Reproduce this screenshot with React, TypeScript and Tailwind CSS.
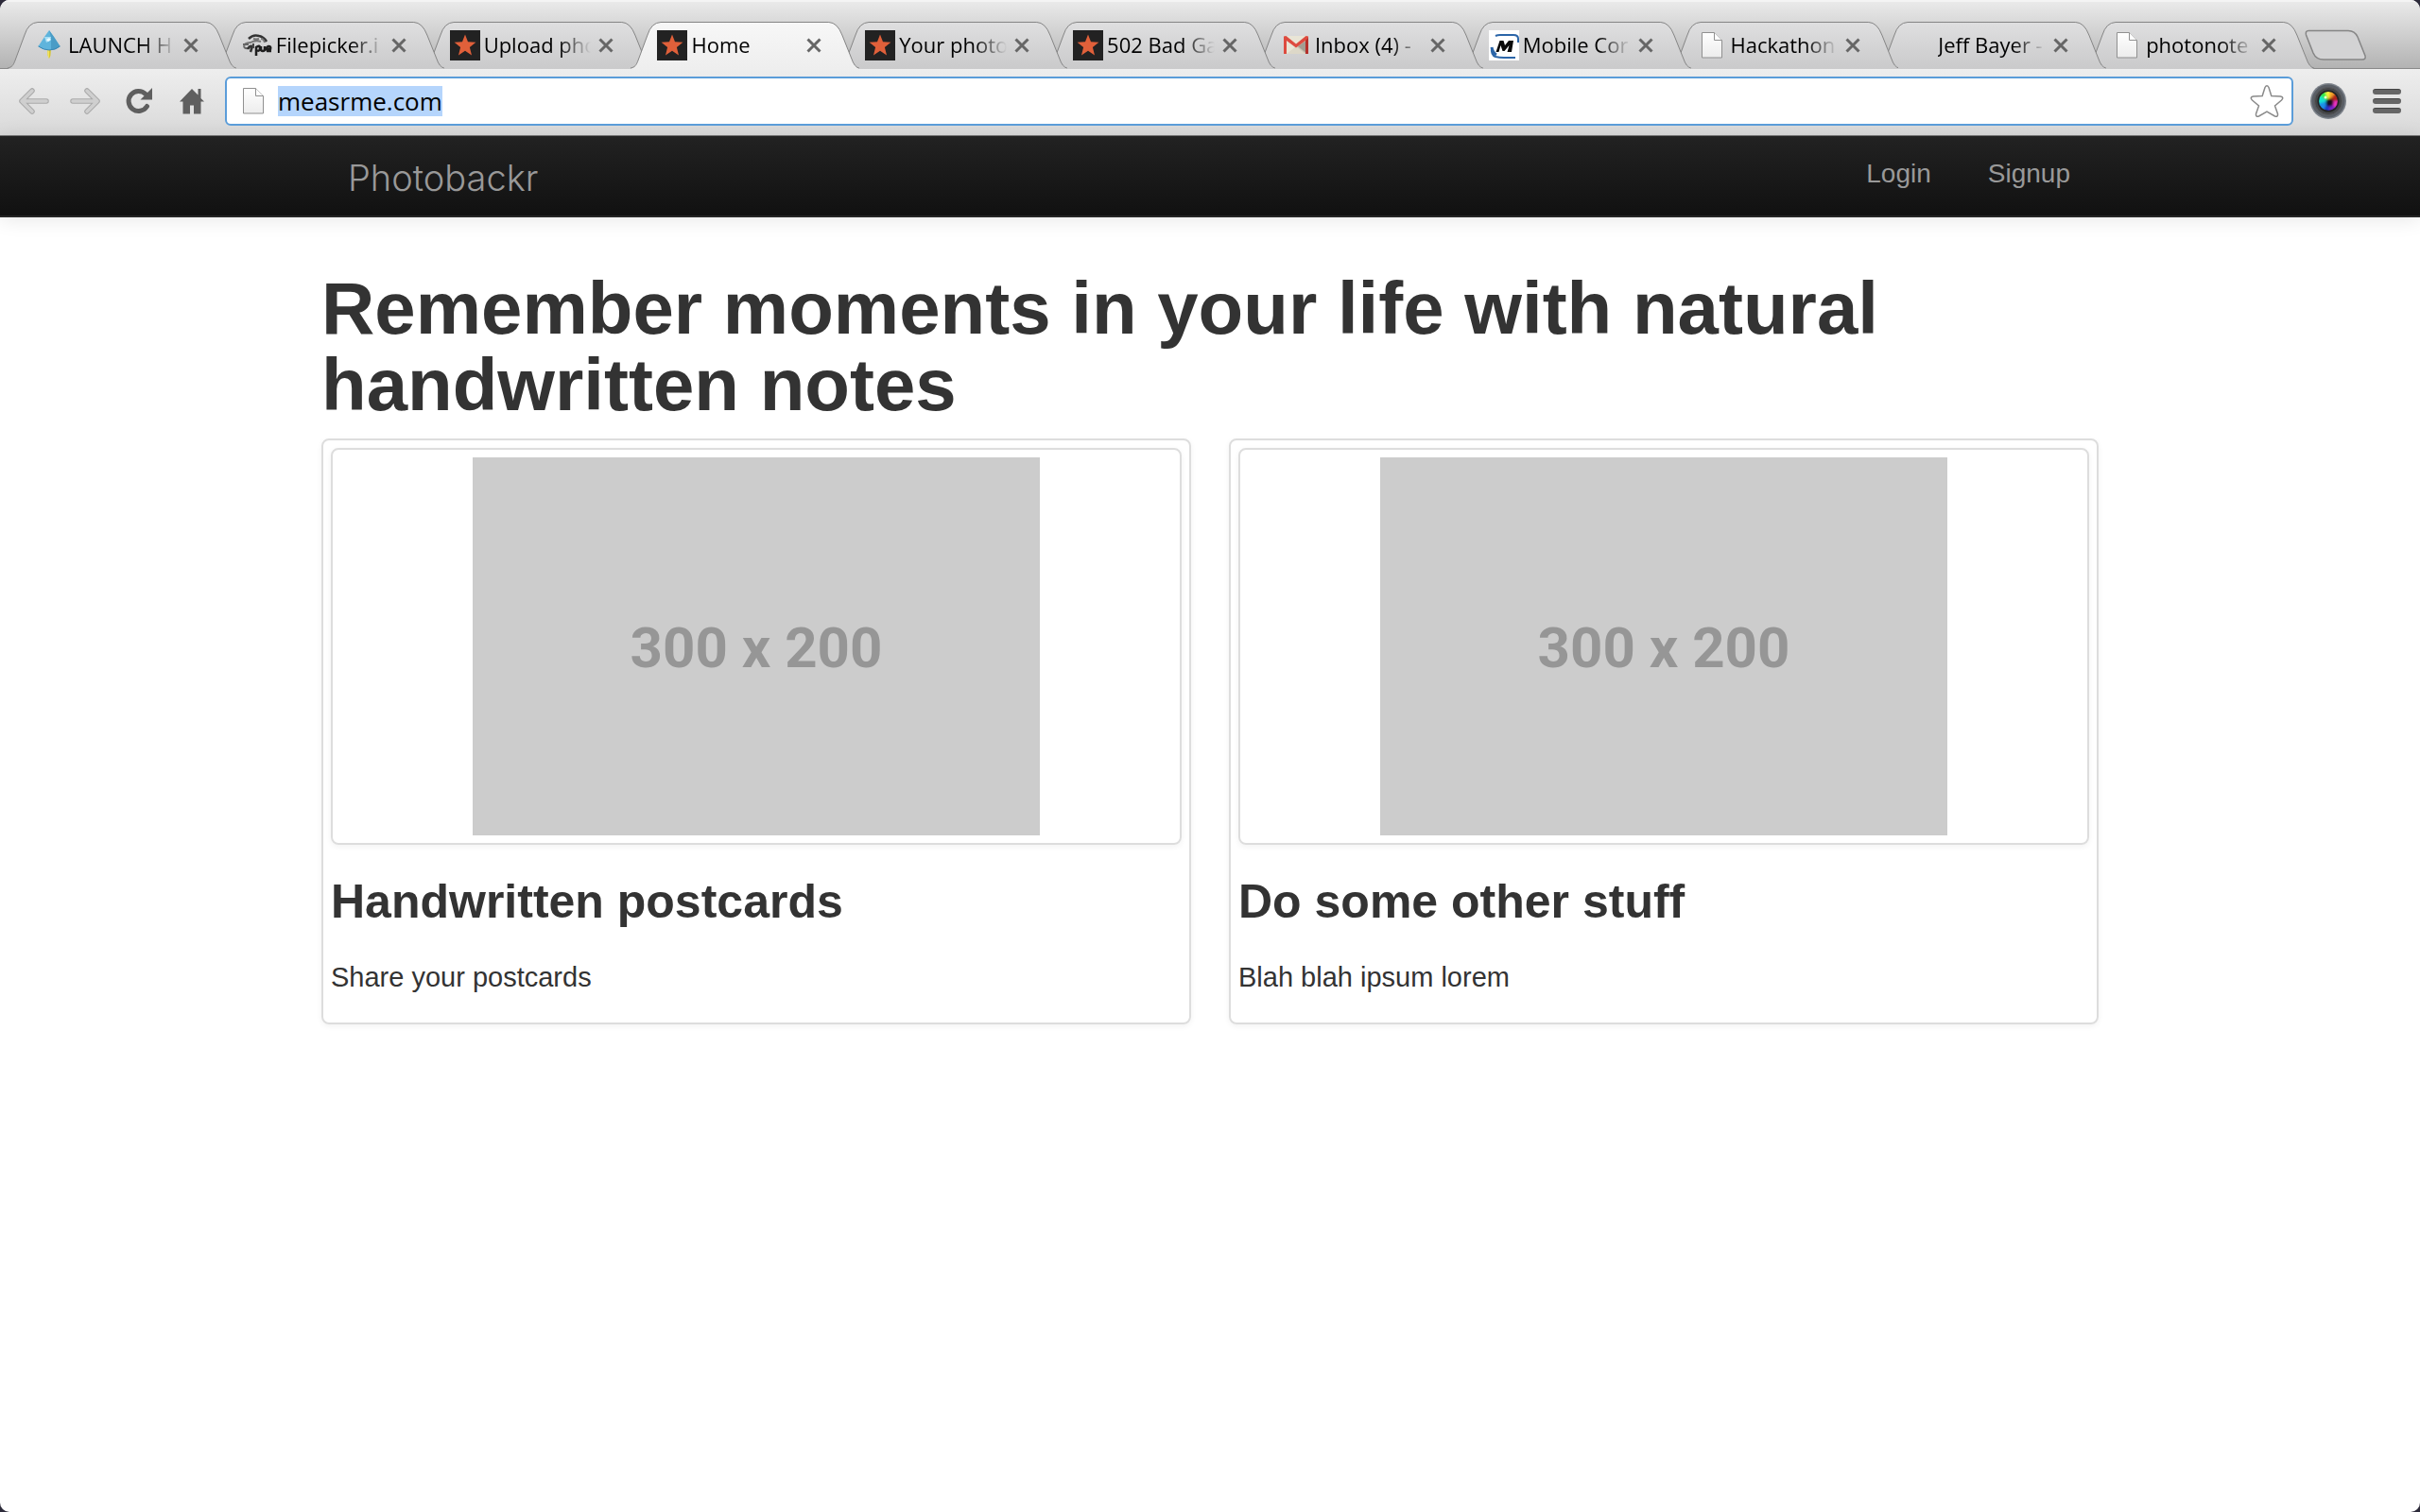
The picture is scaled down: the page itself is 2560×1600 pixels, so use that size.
import { useEffect, useId, useRef, type ReactNode } from "react";

function StarFavicon() {
  return (
    <svg viewBox="0 0 32 32" className="size-8" aria-hidden="true">
      <rect width="32" height="32" fill="#222" />
      <path d="M16 4.500l3 7.800 8.400.5-6.500 5.200 2.100 8.400L16 21.700l-7 4.700 2.100-8.400L4.600 12.800l8.400-.5z" fill="#e0603a" />
    </svg>
  );
}

function PageIcon() {
  const id = useId();
  return (
    <svg viewBox="0 0 32 32" className="size-8" aria-hidden="true">
      <defs>
        <linearGradient id={id} x1="0" y1="0" x2="0" y2="1">
          <stop offset="0" stopColor="#fff" />
          <stop offset="1" stopColor="#ececec" />
        </linearGradient>
      </defs>
      <path d="M5.500 2.500h13l8 8v18.500h-21z" fill={`url(#${id})`} stroke="#909090" />
      <path d="M18.500 2.500v8h8" fill="#fff" stroke="#909090" />
    </svg>
  );
}

function LaunchFavicon() {
  return (
    <svg viewBox="0 0 32 32" className="size-8" aria-hidden="true">
      <path d="M14 18h4l-.6 9L16 30l-1.400-3z" fill="#d9c62c" />
      <path d="M14 18h2v12l-1.400-3z" fill="#efe160" />
      <path d="M16 0l5 7 6.500 10-4.500 3-7 1-7-1-4.500-3L11 7z" fill="#5fb4dc" />
      <path d="M16 0l5 7 6.500 10-4.500 3-5 .8L18 8z" fill="#4a9cc6" />
      <path d="M11 7h7l-1 4-4 2z" fill="#a5def5" />
      <path d="M13 10l3-2 2 2-3 2z" fill="#eafaff" />
      <path d="M4.500 17l6 3 5.500 1 6-1 5.500-3" fill="none" stroke="#3987b5" />
    </svg>
  );
}

function FilepickerFavicon() {
  return (
    <svg viewBox="0 0 32 32" className="size-8" fill="none" aria-hidden="true">
      <path d="M7 9q5-5 11-3 5 1 8 6" stroke="#333" strokeWidth="2.500" />
      <path d="M2 18q0-5 7-5 5-3 11-1M12 9q3 1 6 0M20 9q3 0 4 4" stroke="#777" strokeWidth="2" />
      <path d="M1 15h6M2 18q4 3 8-1" stroke="#666" strokeWidth="2" />
      <path d="M6 20q2-4 5-3l-2 6" stroke="#333" strokeWidth="2.500" />
      <path d="M15 27v-9q4-3 4 1t-4 2M20 17v4q2 2 4 0v-4M31 22h-4q-2-4 1-5 3 0 2 3h-3" stroke="#1f1f1f" strokeWidth="2.500" />
      <path d="M12 14v5" stroke="#444" strokeWidth="2" />
    </svg>
  );
}

function GmailFavicon() {
  return (
    <svg viewBox="0 0 32 32" className="size-8" aria-hidden="true">
      <path d="M4 6h24v19H4z" fill="#e9e5d6" />
      <path d="M28 10v15H8l10-8z" fill="#c9c4b4" />
      <path d="M18 17l10-7v15z" fill="#a39d92" />
      <path d="M6 25l10-8 10 8" fill="#ddd8c8" />
      <path d="M3 6.500L5.500 6 16 14.500 26.500 6l2.500.5V25h-3V11L16 18.500 6 11v14H3z" fill="#dd4b40" />
      <path d="M26 11l3-3v17h-3z" fill="#b4302b" />
    </svg>
  );
}

function MobileFavicon() {
  return (
    <svg viewBox="0 0 32 32" className="size-8" fill="none" aria-hidden="true">
      <rect width="32" height="32" fill="#fff" />
      <path d="M7 6q2-1 5-1h14q5 0 5 4v4M3 18q-1 8 4 10 4 1 9 1h12" stroke="#2b65a8" strokeWidth="2" />
      <path d="M3 18q1 6 5 8" stroke="#2b65a8" strokeWidth="3" />
      <path d="M7.500 23h3l2-7 2 6h2l5-6-2 7h4.500l2-12h-5l-4 5-1.500-5h-4z" fill="#0b0b0b" />
    </svg>
  );
}

function BlankFavicon() {
  return <span className="block size-8" />;
}

type Tab = { title: string; icon: () => ReactNode; active?: boolean; layer: string };

const tabs: Tab[] = [
  { title: "LAUNCH H", icon: LaunchFavicon, layer: "z-[11]" },
  { title: "Filepicker.i", icon: FilepickerFavicon, layer: "z-10" },
  { title: "Upload pho", icon: StarFavicon, layer: "z-[9]" },
  { title: "Home", icon: StarFavicon, active: true, layer: "z-20" },
  { title: "Your photo", icon: StarFavicon, layer: "z-[7]" },
  { title: "502 Bad Ga", icon: StarFavicon, layer: "z-[6]" },
  { title: "Inbox (4) -", icon: GmailFavicon, layer: "z-[5]" },
  { title: "Mobile Cor", icon: MobileFavicon, layer: "z-[4]" },
  { title: "Hackathon", icon: PageIcon, layer: "z-[3]" },
  { title: "Jeff Bayer -", icon: BlankFavicon, layer: "z-[2]" },
  { title: "photonote", icon: PageIcon, layer: "z-[1]" },
];

function TabShape({ active }: { active?: boolean }) {
  const id = useId();
  return (
    <svg viewBox="0 0 242 50" preserveAspectRatio="none" className="absolute inset-0 -z-10 size-full" aria-hidden="true">
      <defs>
        <linearGradient id={id} x1="0" y1="0" x2="0" y2="1">
          <stop offset="0" stopColor={active ? "#f7f7f7" : "#dfdfe0"} />
          <stop offset="1" stopColor={active ? "#eeeeee" : "#cacacb"} />
        </linearGradient>
      </defs>
      <path
        d="M0 50C5 48 6 46 8 41L18 14Q22 1 32 .5H210Q219 1 224 14L234 39Q237 48 242 50Z"
        fill={`url(#${id})`}
      />
      <path
        d="M0 49C5 48 6 46 8 41L18 14Q22 1 32 .5H210Q219 1 224 14L234 39Q237 48 242 49"
        fill="none"
        stroke="#858585"
      />
    </svg>
  );
}

function BrowserTab({ tab }: { tab: Tab }) {
  const Icon = tab.icon;
  return (
    <div
      role="tab"
      aria-selected={!!tab.active}
      className={`relative isolate -ml-[22px] flex h-[50px] min-w-0 flex-1 items-center pr-9 pl-7 ${tab.layer}`}
    >
      <TabShape active={tab.active} />
      <span className="shrink-0">
        <Icon />
      </span>
      <span className="ml-1 min-w-0 flex-1 overflow-hidden mask-r-from-70% mask-r-to-100% pb-[2px] text-[22px] leading-8 font-medium whitespace-nowrap">
        {tab.title}
      </span>
      <button type="button" aria-label={`Close ${tab.title}`} className="ml-1 flex size-6 shrink-0 items-center justify-center">
        <svg viewBox="0 0 16 16" className="size-4" fill="none" stroke="#666" strokeWidth="3" aria-hidden="true">
          <path d="M1.500 1.500l13 13M14.500 1.500l-13 13" />
        </svg>
      </button>
    </div>
  );
}

function TabStrip() {
  return (
    <div className="flex h-[73px] items-end bg-linear-to-b from-[#ebebeb] via-[#cfcfcf] to-[#b2b2b2] shadow-[inset_0_-1px_0_#8a8a8a,inset_0_2px_0_#f4f4f4]">
      <div role="tablist" className="flex min-w-0 flex-1 pl-[30px]">
        {tabs.map((t) => (
          <BrowserTab key={t.title} tab={t} />
        ))}
      </div>
      <button type="button" aria-label="New tab" className="mr-14 mb-2 -ml-[10px]">
        <svg viewBox="0 0 66 34" className="h-[34px] w-[66px]" aria-hidden="true">
          <path
            d="M4 1.500H46Q53 1.500 56 8L64 28Q65 32 61 32H20Q12 32 9 25L1.500 6Q.5 1.500 4 1.500Z"
            fill="#d3d3d4"
            stroke="#858585"
            strokeWidth="1.500"
          />
        </svg>
      </button>
    </div>
  );
}

function Arrow({ flip }: { flip?: boolean }) {
  return (
    <svg viewBox="0 0 32 28" className={flip ? "h-7 w-8 -scale-x-100" : "h-7 w-8"} fill="none" strokeLinecap="round" strokeLinejoin="round" aria-hidden="true">
      <path d="M14 3L3 14l11 11M3 14h26" stroke="#a9a9a9" strokeWidth="5.500" />
      <path d="M14 3L3 14l11 11M3 14h26" stroke="#cfcfcf" strokeWidth="3.500" />
    </svg>
  );
}

function CameraIcon() {
  const id = useId();
  return (
    <svg viewBox="0 0 38 38" className="size-[38px]" aria-hidden="true">
      <defs>
        <filter id={id} x="-20%" y="-20%" width="140%" height="140%">
          <feGaussianBlur stdDeviation="1.200" />
        </filter>
        <clipPath id={`${id}c`}>
          <circle cx="19" cy="19" r="10" />
        </clipPath>
      </defs>
      <circle cx="19" cy="19" r="19" fill="#7d838b" />
      <circle cx="19" cy="19" r="17.500" fill="#5a5f66" />
      <circle cx="19" cy="19" r="14.500" fill="#444648" stroke="#58595b" />
      <circle cx="19" cy="19" r="11.500" fill="#222223" />
      <g clipPath={`url(#${id}c)`}>
        <g filter={`url(#${id})`}>
          <circle cx="19" cy="19" r="9" fill="#2a2440" />
          <path d="M19 19L8 24V10z" fill="#17e3d0" />
          <path d="M19 19L8 12 17 7z" fill="#35e84a" />
          <path d="M19 19L15 7h8z" fill="#f8f63a" />
          <path d="M19 19L21 7l8 3z" fill="#f3a32a" />
          <path d="M19 19l8-9 4 10z" fill="#b3271f" />
          <path d="M19 19l11 0-3 9z" fill="#f032c4" />
          <path d="M19 19l9 8-8 4z" fill="#7a22c8" />
          <path d="M19 19l2 11-8-1z" fill="#1d35c8" />
          <path d="M19 19l-6 11-6-8z" fill="#1a8fe8" />
          <circle cx="20.500" cy="20.500" r="4" fill="#15111b" />
        </g>
      </g>
      <circle cx="16" cy="15" r="1.500" fill="#f4ffc8" />
    </svg>
  );
}

function Toolbar() {
  const url = useRef<HTMLInputElement>(null);
  useEffect(() => {
    url.current?.focus();
    url.current?.select();
  }, []);
  return (
    <div className="flex h-[71px] items-center border-b border-[#767676] bg-linear-to-b from-[#eeeeee] to-[#d9d9d9] pr-5 pb-[2px] pl-5">
      <button type="button" aria-label="Back">
        <Arrow />
      </button>
      <button type="button" aria-label="Forward" className="ml-[22px]">
        <Arrow flip />
      </button>
      <button type="button" aria-label="Reload" className="ml-[27px]">
        <svg viewBox="0 0 28 28" className="size-7" aria-hidden="true">
          <path d="M22.500 19.500A10.500 10.500 0 1 1 21 6.500" fill="none" stroke="#5f5f5f" strokeWidth="5" strokeLinecap="round" />
          <path d="M28 0v12.500H15.500z" fill="#5f5f5f" />
        </svg>
      </button>
      <button type="button" aria-label="Home" className="ml-[29px]">
        <svg viewBox="0 0 26 28" className="h-7 w-[26px]" fill="#5f5f5f" aria-hidden="true">
          <path d="M13 1L0 14.500h3.500V27.500H11V18.500h4v9h7.500v-13H26L22.500 11V1H19.500v6.500z" />
        </svg>
      </button>
      <div className="ml-[22px] flex h-[52px] min-w-0 flex-1 items-center rounded-md border-2 border-[#5b9dd9] bg-white pr-2 pl-3">
        <PageIcon />
        <input
          ref={url}
          type="text"
          aria-label="Address"
          defaultValue="measrme.com"
          className="ml-[10px] h-8 min-w-0 flex-1 bg-transparent text-[26px] leading-8 font-medium text-black outline-none selection:bg-[#b5d5fc] selection:text-black"
        />
        <button type="button" aria-label="Bookmark this page">
          <svg viewBox="0 0 36 36" className="size-9" aria-hidden="true">
            <path
              d="M16 3.500Q18 0 20 3.500L22.800 12.500 32.500 13Q36.500 14 33.500 17L26.500 23 29.500 31.500Q30 35 26.500 34L18 29 9.500 34Q6 35 6.500 31.500L9.500 23 2.500 17Q-.5 14 3.500 13L13.200 12.500Z"
              fill="#fff"
              stroke="#8a8a8a"
              strokeWidth="1.500"
            />
          </svg>
        </button>
      </div>
      <button type="button" aria-label="Camera extension" className="ml-[18px]">
        <CameraIcon />
      </button>
      <button type="button" aria-label="Menu" className="ml-7 flex w-[30px] flex-col gap-1">
        <span className="h-[6px] rounded-full border-t border-[#444] bg-[#666]" />
        <span className="h-[6px] rounded-full border-t border-[#444] bg-[#666]" />
        <span className="h-[6px] rounded-full border-t border-[#444] bg-[#666]" />
      </button>
    </div>
  );
}

function NavBar() {
  return (
    <nav className="border-b-2 border-[#252525] bg-linear-to-b from-[#222] to-[#111] shadow-[0_2px_20px_rgba(0,0,0,0.1)]">
      <div className="mx-auto flex max-w-[1880px] items-center justify-between leading-10 text-[#999]">
        <a href="#" className="pt-6 pb-5 pl-7 font-['Inter'] text-[38px] font-light">
          Photobackr
        </a>
        <div className="flex text-[28px]">
          <a href="#" className="px-[30px] pt-5 pb-6">
            Login
          </a>
          <a href="#" className="px-[30px] pt-5 pb-6">
            Signup
          </a>
        </div>
      </div>
    </nav>
  );
}

function Thumbnail({ title, text }: { title: string; text: string }) {
  return (
    <section className="rounded-lg border-2 border-[#ddd] p-2 shadow-[0_2px_6px_rgba(0,0,0,0.055)]">
      <div className="rounded-lg border-2 border-[#ddd] p-2 shadow-[0_2px_6px_rgba(0,0,0,0.055)]">
        <div className="mx-auto flex h-[400px] max-w-[600px] items-center justify-center bg-[#ccc] pt-1 font-['Roboto',sans-serif] text-[60px] leading-none font-bold text-[#969696]">
          300 x 200
        </div>
      </div>
      <h3 className="my-5 text-[50px] leading-[80px] font-bold">{title}</h3>
      <p className="mb-5 text-[29px] leading-10">{text}</p>
    </section>
  );
}

export default function App() {
  return (
    <div className="min-h-screen bg-[#2d2b3a] font-['Liberation_Sans',Arial,sans-serif]">
      <div className="min-h-screen overflow-hidden rounded-[10px] bg-white text-[#333]">
        <header className="font-['Open_Sans','Noto_Sans',sans-serif] text-black">
          <TabStrip />
          <Toolbar />
        </header>
        <NavBar />
        <main className="mx-auto max-w-[1880px] pt-14">
          <h1 className="mb-4 text-[78px] leading-[81px] font-bold">
            Remember moments in your life with natural handwritten notes
          </h1>
          <div className="grid grid-cols-2 gap-10">
            <Thumbnail title="Handwritten postcards" text="Share your postcards" />
            <Thumbnail title="Do some other stuff" text="Blah blah ipsum lorem" />
          </div>
        </main>
      </div>
    </div>
  );
}
